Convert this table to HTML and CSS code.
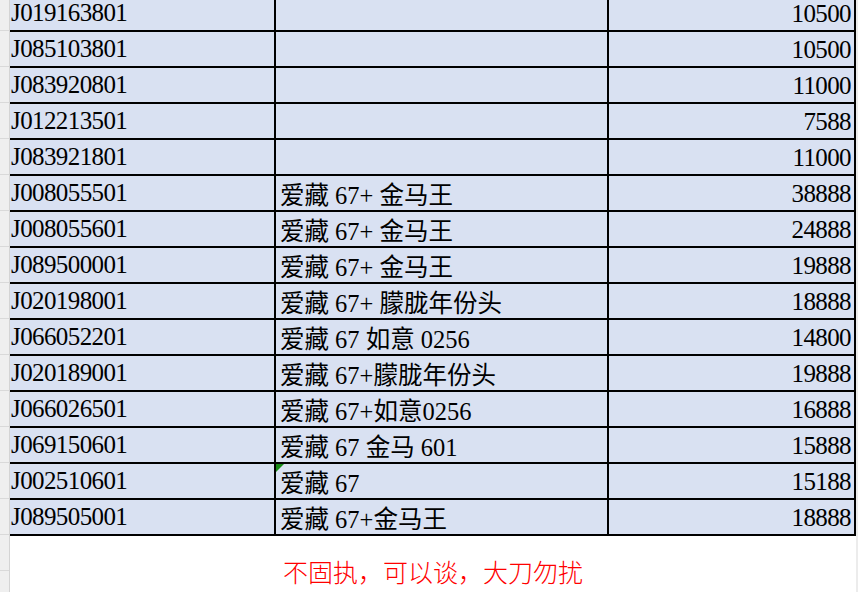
FILE: index.html
```html
<!DOCTYPE html>
<html>
<head>
<meta charset="utf-8">
<title>Sheet</title>
<link rel="stylesheet" href="styles.css">
</head>
<body>
<div class="sheet">
  <div class="rowhead">
    <div class="rh first"></div>
    <div class="rh"></div><div class="rh"></div><div class="rh"></div><div class="rh"></div>
    <div class="rh"></div><div class="rh"></div><div class="rh"></div><div class="rh"></div>
    <div class="rh"></div><div class="rh"></div><div class="rh"></div><div class="rh"></div>
    <div class="rh"></div><div class="rh"></div><div class="rh"></div><div class="rh"></div>
  </div>
  <div class="main">
    <div class="grid">
      <div class="cell c1">J019163801</div><div class="cell c2"></div><div class="cell c3">10500</div>
      <div class="cell c1">J085103801</div><div class="cell c2"></div><div class="cell c3">10500</div>
      <div class="cell c1">J083920801</div><div class="cell c2"></div><div class="cell c3">11000</div>
      <div class="cell c1">J012213501</div><div class="cell c2"></div><div class="cell c3">7588</div>
      <div class="cell c1">J083921801</div><div class="cell c2"></div><div class="cell c3">11000</div>
      <div class="cell c1">J008055501</div><div class="cell c2">爱藏 67+ 金马王</div><div class="cell c3">38888</div>
      <div class="cell c1">J008055601</div><div class="cell c2">爱藏 67+ 金马王</div><div class="cell c3">24888</div>
      <div class="cell c1">J089500001</div><div class="cell c2">爱藏 67+ 金马王</div><div class="cell c3">19888</div>
      <div class="cell c1">J020198001</div><div class="cell c2">爱藏 67+ 朦胧年份头</div><div class="cell c3">18888</div>
      <div class="cell c1">J066052201</div><div class="cell c2">爱藏 67 如意 0256</div><div class="cell c3">14800</div>
      <div class="cell c1">J020189001</div><div class="cell c2">爱藏 67+朦胧年份头</div><div class="cell c3">19888</div>
      <div class="cell c1">J066026501</div><div class="cell c2">爱藏 67+如意0256</div><div class="cell c3">16888</div>
      <div class="cell c1">J069150601</div><div class="cell c2">爱藏 67 金马 601</div><div class="cell c3">15888</div>
      <div class="cell c1">J002510601</div><div class="cell c2 flag">爱藏 67</div><div class="cell c3">15188</div>
      <div class="cell c1">J089505001</div><div class="cell c2">爱藏 67+金马王</div><div class="cell c3">18888</div>
    </div>
    <div class="note">不固执，可以谈，大刀勿扰</div>
  </div>
  <div class="edge"></div>
</div>
</body>
</html>
```

FILE: styles.css
```css
html, body {
  margin: 0;
  padding: 0;
  background: #ffffff;
}

.sheet {
  display: flex;
  width: 858px;
  height: 592px;
  overflow: hidden;
}

.rowhead {
  flex: none;
  width: 9px;
  border-right: 1px solid #d4d4d4;
  background: #efefef;
  display: flex;
  flex-direction: column;
}

.rh {
  flex: none;
  height: 35px;
  border-bottom: 1px solid #d9d9d9;
}

.rh.first {
  height: 30px;
}

.main {
  flex: none;
  width: 846px;
  margin-top: -6px;
  display: flex;
  flex-direction: column;
}

.grid {
  display: grid;
  grid-template-columns: 264px 331px 245px;
  grid-auto-rows: 34px;
  gap: 2px;
  padding: 2px 2px 2px 0;
  background: #000000;
}

.cell {
  background: #d9e1f2;
  color: #000000;
  font-family: "Liberation Serif", "Noto Sans CJK SC", serif;
  font-size: 25px;
  line-height: 34px;
  white-space: nowrap;
  overflow: hidden;
  box-sizing: border-box;
}

.c1 {
  padding-left: 1px;
  letter-spacing: -0.6px;
}

.c2 {
  font-size: 24.5px;
  padding-left: 4px;
  padding-top: 3px;
  position: relative;
}

.c3 {
  text-align: right;
  padding-right: 3px;
  padding-top: 1px;
  letter-spacing: -0.6px;
}

.flag::before {
  content: "";
  position: absolute;
  left: 0;
  top: 0;
  width: 0;
  height: 0;
  border-top: 8px solid #178a17;
  border-right: 8px solid transparent;
}

.note {
  padding-top: 22px;
  line-height: 26px;
  text-align: center;
  color: #ff0000;
  font-family: "Noto Sans CJK SC", sans-serif;
  font-weight: 300;
  font-size: 25px;
}

.edge {
  flex: none;
  width: 2px;
  background: #ececec;
}
```
